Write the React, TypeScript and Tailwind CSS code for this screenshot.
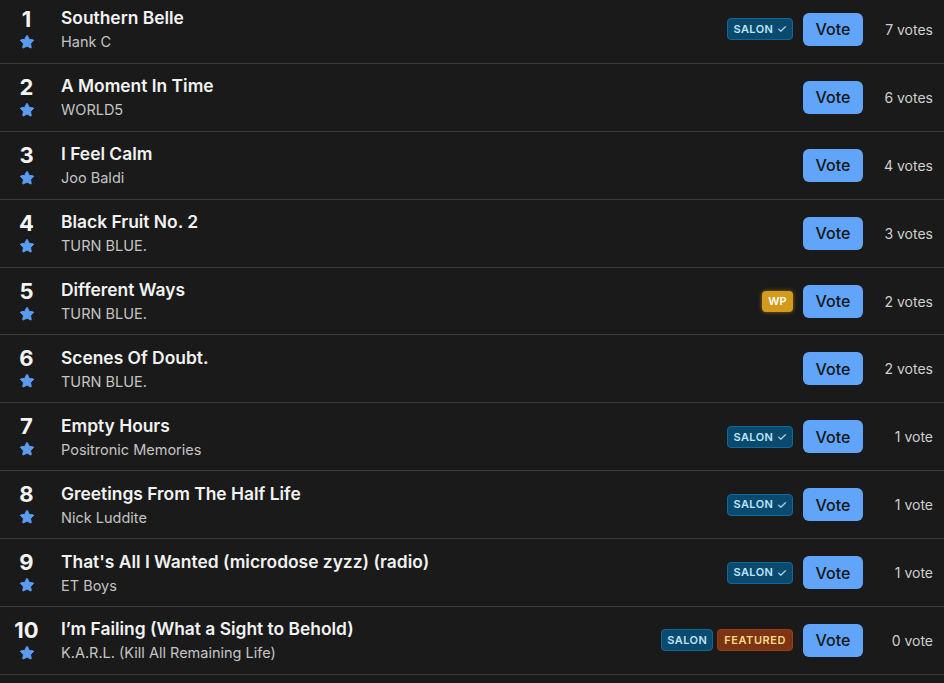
import { Star } from "lucide-react";

type Badge = "salon" | "salonCheck" | "wp" | "featured";

const tracks: { title: string; artist: string; votes: string; badges: Badge[] }[] = [
  { title: "Southern Belle", artist: "Hank C", votes: "7 votes", badges: ["salonCheck"] },
  { title: "A Moment In Time", artist: "WORLD5", votes: "6 votes", badges: [] },
  { title: "I Feel Calm", artist: "Joo Baldi", votes: "4 votes", badges: [] },
  { title: "Black Fruit No. 2", artist: "TURN BLUE.", votes: "3 votes", badges: [] },
  { title: "Different Ways", artist: "TURN BLUE.", votes: "2 votes", badges: ["wp"] },
  { title: "Scenes Of Doubt.", artist: "TURN BLUE.", votes: "2 votes", badges: [] },
  { title: "Empty Hours", artist: "Positronic Memories", votes: "1 vote", badges: ["salonCheck"] },
  { title: "Greetings From The Half Life", artist: "Nick Luddite", votes: "1 vote", badges: ["salonCheck"] },
  { title: "That's All I Wanted (microdose zyzz) (radio)", artist: "ET Boys", votes: "1 vote", badges: ["salonCheck"] },
  { title: "I’m Failing (What a Sight to Behold)", artist: "K.A.R.L. (Kill All Remaining Life)", votes: "0 vote", badges: ["salon", "featured"] },
];

function TrackBadge({ kind }: { kind: Badge }) {
  if (kind === "wp") {
    return (
      <span className="flex h-[21px] items-center rounded-[4px] bg-[#d49a1c] px-[6px] text-[11px] font-semibold tracking-wide text-white shadow-[0_0_4px_rgba(212,154,28,0.6)]">
        WP
      </span>
    );
  }
  if (kind === "featured") {
    return (
      <span className="flex h-[22px] items-center rounded-[4px] border border-[#9a3f15] bg-[#7c3412] px-[6px] text-[11px] font-semibold tracking-[0.05em] text-[#fcd98a]">
        FEATURED
      </span>
    );
  }
  return (
    <span className="flex h-[22px] items-center gap-[3px] rounded-[4px] border border-[#0f6a9c] bg-[#0b4a6f] px-[5px] text-[11px] font-semibold tracking-[0.04em] text-[#bfe3f7]">
      SALON
      {kind === "salonCheck" && <span className="text-[12px] font-normal tracking-normal">✓</span>}
    </span>
  );
}

export default function App() {
  return (
    <div
      className="min-h-screen overflow-hidden bg-[#1a1a1a] text-white"
      style={{ fontFamily: "Inter, 'Noto Sans', sans-serif" }}
    >
      <ul className="-mt-1">
        {tracks.map((t, i) => (
          <li key={i} className="flex h-[67.9px] items-center border-b border-[#3c3c3c]">
            <div className="mb-[3px] flex w-[53px] shrink-0 flex-col items-center">
              <span className="text-[22px] font-bold leading-[26px] text-[#f4f4f4]">{i + 1}</span>
              <Star className="mt-[2px] h-[16px] w-[16px] fill-[#5c9cf0] text-[#5c9cf0]" strokeWidth={1.5} />
            </div>
            <div className="ml-[8px] flex min-w-0 flex-1 flex-col">
              <span className="text-[17.4px] font-semibold leading-6 text-[#f2f2f2]">{t.title}</span>
              <span className="mt-[2px] text-[14.5px] leading-5 text-[#c4c4c4]">{t.artist}</span>
            </div>
            <div className="flex items-center gap-[4px]">
              {t.badges.map((b) => (
                <TrackBadge key={b} kind={b} />
              ))}
            </div>
            <button className="ml-[10px] h-[33px] w-[60px] rounded-[6px] bg-[#60a5fa] text-[16px] font-medium text-[#161616]">
              Vote
            </button>
            <span className="w-[70px] text-right text-[14px] text-[#cfcfcf]">{t.votes}</span>
            <span className="w-[11px]" />
          </li>
        ))}
      </ul>
    </div>
  );
}
